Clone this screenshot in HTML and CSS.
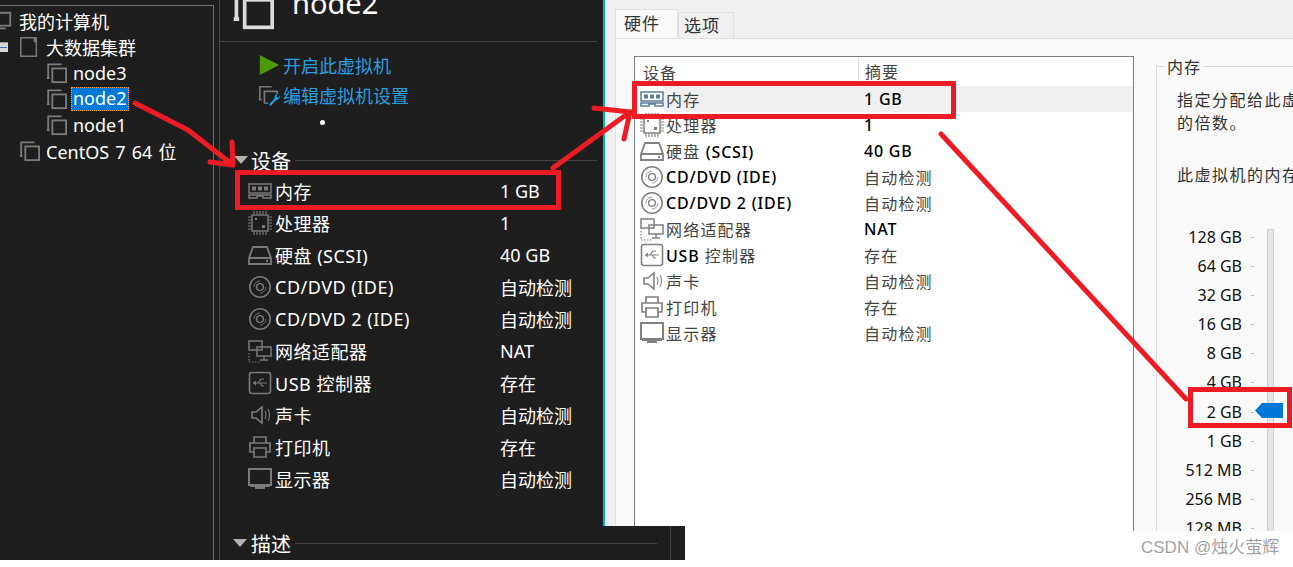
FILE: index.html
```html
<!DOCTYPE html>
<html lang="en">
<head>
    <meta charset="UTF-8">
    <title>node2</title>
    <link rel="stylesheet" href="styles.css">
</head>
<body>
    <svg class="defs" width="0" height="0">
        <symbol id="i-vm" viewBox="0 0 24 24"><path d="M3.5 17V2.5H18M2 17.5h3" fill="none" stroke="currentColor" stroke-width="2"/><rect x="8" y="7" width="15" height="15" fill="none" stroke="currentColor" stroke-width="2"/></symbol>
        <symbol id="i-team" viewBox="0 0 24 24"><path d="M3 2h15v4h1V2h1v20H3z" fill="none" stroke="currentColor" stroke-width="1.6"/></symbol>
        <symbol id="i-pc" viewBox="0 0 24 24"><path d="M1 3h20v14H1zM8 20h8" fill="none" stroke="currentColor" stroke-width="2"/></symbol>
        <symbol id="i-mem" viewBox="0 0 24 24"><path d="M1 5h22v9H1z M1 16h22v3h-8v-2h-6v2H1z" fill="none" stroke="currentColor" stroke-width="1.5"/><path d="M4 7.5h4v4H4zM10 7.5h4v4h-4zM16 7.5h4v4h-4z" fill="currentColor"/></symbol>
        <symbol id="i-cpu" viewBox="0 0 24 24"><rect x="4" y="4" width="16" height="16" fill="none" stroke="currentColor" stroke-width="1.5"/><path d="M6 0v3M9 0v3M12 0v3M15 0v3M18 0v3M6 21v3M9 21v3M12 21v3M15 21v3M18 21v3M0 6h3M0 9h3M0 12h3M0 15h3M0 18h3M21 6h3M21 9h3M21 12h3M21 15h3M21 18h3" stroke="currentColor" stroke-width="1.2"/><rect x="7" y="7" width="2" height="2" fill="currentColor"/><rect x="14" y="14" width="3" height="3" fill="currentColor"/></symbol>
        <symbol id="i-hdd" viewBox="0 0 24 24"><path d="M1 15 5 4h14l4 11v6H1zM1 15h22" fill="none" stroke="currentColor" stroke-width="1.8"/><rect x="18" y="17" width="2" height="2" fill="currentColor"/></symbol>
        <symbol id="i-cd" viewBox="0 0 24 24"><circle cx="12" cy="12" r="10.2" fill="none" stroke="currentColor" stroke-width="1.6"/><circle cx="12" cy="12" r="3.4" fill="none" stroke="currentColor" stroke-width="1.4"/><path d="M6 12a6 6 0 0 1 6-6M18 12a6 6 0 0 1-6 6" fill="none" stroke="currentColor" stroke-width=".8"/></symbol>
        <symbol id="i-net" viewBox="0 0 24 24"><path d="M1 2h13v9H1zM9 8h14v9H9zM16 17v3M12 21h8" fill="none" stroke="currentColor" stroke-width="1.5"/><path d="M1 14v9h11M4 23h1" fill="none" stroke="currentColor" stroke-width="1.2" stroke-dasharray="1.5 1.5"/></symbol>
        <symbol id="i-usb" viewBox="0 0 24 24"><rect x="1.5" y="1.5" width="21" height="21" rx="2.5" fill="none" stroke="currentColor" stroke-width="1.6"/><path d="M5 12h14M10 12l3-4h3M12 12l2 3h2" fill="none" stroke="currentColor" stroke-width="1.2"/><path d="m8 9.500-3 2.500 3 2.500z" fill="currentColor"/></symbol>
        <symbol id="i-snd" viewBox="0 0 24 24"><path d="M4 9h4l6-5v16l-6-5H4z" fill="none" stroke="currentColor" stroke-width="1.6"/><path d="M17 8q2 4 0 8M20 6q3 6 0 12" fill="none" stroke="currentColor" stroke-width="1.1"/></symbol>
        <symbol id="i-prn" viewBox="0 0 24 24"><path d="M6 8V2h12v6M6 17H2V8h20v9h-4M6 13h12v9H6z" fill="none" stroke="currentColor" stroke-width="1.7"/></symbol>
        <symbol id="i-lcd" viewBox="0 0 24 24"><path d="M1 2h22v16H1z" fill="none" stroke="currentColor" stroke-width="2"/><path d="M2 18h20v2H2zM7 20h10v2H7z" fill="currentColor"/></symbol>
    </svg>

    <div class="vm-app">
        <div class="tree">
            <div class="tree-row root"><svg class="tree-icon"><use href="#i-pc"/></svg>我的计算机</div>
            <div class="tree-row group"><span class="expander"></span><svg class="tree-icon"><use href="#i-team"/></svg>大数据集群</div>
            <div class="tree-row node"><svg class="tree-icon"><use href="#i-vm"/></svg>node3</div>
            <div class="tree-row node"><svg class="tree-icon"><use href="#i-vm"/></svg><span class="selected">node2</span></div>
            <div class="tree-row node"><svg class="tree-icon"><use href="#i-vm"/></svg>node1</div>
            <div class="tree-row top"><svg class="tree-icon"><use href="#i-vm"/></svg>CentOS 7 64 位</div>
        </div>

        <div class="details">
            <div class="title-bar">
                <svg class="title-icon"><use href="#i-vm"/></svg>
                <span class="title">node2</span>
            </div>
            <div class="actions">
                <a class="action"><svg class="action-icon" viewBox="0 0 24 24"><path d="M2 1 23 12 2 23z" fill="#4b9a06"/></svg>开启此虚拟机</a>
                <a class="action"><svg class="action-icon" viewBox="0 0 24 24"><path d="M2 17V3h13M1 17h3M7 21V8h14v3M7 21h4" fill="none" stroke="#777" stroke-width="1.8"/><path d="m12 22 6-6q-1-4 3-5l-1 3 2 1 2-3q0 5-5 6l-5 6z" fill="#1ea0d8"/></svg>编辑虚拟机设置</a>
            </div>
            <span class="dot"></span>

            <div class="section-head first"><span class="caret"></span><span>设备</span><span class="rule"></span></div>
            <div class="dev-list">
                <div class="dev-row mem"><svg class="dev-icon"><use href="#i-mem"/></svg><span class="dev-name">内存</span><span>1 GB</span></div>
                <div class="dev-row"><svg class="dev-icon"><use href="#i-cpu"/></svg><span class="dev-name">处理器</span><span>1</span></div>
                <div class="dev-row"><svg class="dev-icon"><use href="#i-hdd"/></svg><span class="dev-name">硬盘 (SCSI)</span><span>40 GB</span></div>
                <div class="dev-row"><svg class="dev-icon"><use href="#i-cd"/></svg><span class="dev-name">CD/DVD (IDE)</span><span>自动检测</span></div>
                <div class="dev-row"><svg class="dev-icon"><use href="#i-cd"/></svg><span class="dev-name">CD/DVD 2 (IDE)</span><span>自动检测</span></div>
                <div class="dev-row"><svg class="dev-icon"><use href="#i-net"/></svg><span class="dev-name">网络适配器</span><span>NAT</span></div>
                <div class="dev-row"><svg class="dev-icon"><use href="#i-usb"/></svg><span class="dev-name">USB 控制器</span><span>存在</span></div>
                <div class="dev-row"><svg class="dev-icon"><use href="#i-snd"/></svg><span class="dev-name">声卡</span><span>自动检测</span></div>
                <div class="dev-row"><svg class="dev-icon"><use href="#i-prn"/></svg><span class="dev-name">打印机</span><span>存在</span></div>
                <div class="dev-row"><svg class="dev-icon"><use href="#i-lcd"/></svg><span class="dev-name">显示器</span><span>自动检测</span></div>
            </div>

            <div class="section-head second"><span class="caret"></span><span>描述</span><span class="rule"></span></div>
        </div>
        <span class="edge"></span>
    </div>

    <div class="settings">
        <div class="tabs">
            <span class="tab active">硬件</span>
            <span class="tab">选项</span>
        </div>
        <div class="tab-panel">
            <div class="hw-list">
                <div class="hw-head"><span>设备</span><span class="hw-col">摘要</span></div>
                <div class="hw-row current"><svg class="hw-icon blue"><use href="#i-mem"/></svg><span class="hw-name">内存</span><b>1 GB</b></div>
                <div class="hw-row"><svg class="hw-icon"><use href="#i-cpu"/></svg><span class="hw-name">处理器</span><b>1</b></div>
                <div class="hw-row"><svg class="hw-icon"><use href="#i-hdd"/></svg><span class="hw-name">硬盘 <b>(SCSI)</b></span><b>40 GB</b></div>
                <div class="hw-row"><svg class="hw-icon"><use href="#i-cd"/></svg><span class="hw-name"><b>CD/DVD (IDE)</b></span><span>自动检测</span></div>
                <div class="hw-row"><svg class="hw-icon"><use href="#i-cd"/></svg><span class="hw-name"><b>CD/DVD 2 (IDE)</b></span><span>自动检测</span></div>
                <div class="hw-row"><svg class="hw-icon"><use href="#i-net"/></svg><span class="hw-name">网络适配器</span><b>NAT</b></div>
                <div class="hw-row"><svg class="hw-icon"><use href="#i-usb"/></svg><span class="hw-name"><b>USB</b> 控制器</span><span>存在</span></div>
                <div class="hw-row"><svg class="hw-icon"><use href="#i-snd"/></svg><span class="hw-name">声卡</span><span>自动检测</span></div>
                <div class="hw-row"><svg class="hw-icon"><use href="#i-prn"/></svg><span class="hw-name">打印机</span><span>存在</span></div>
                <div class="hw-row"><svg class="hw-icon"><use href="#i-lcd"/></svg><span class="hw-name">显示器</span><span>自动检测</span></div>
            </div>

            <fieldset class="mem-box">
                <legend>内存</legend>
                <p class="mem-text">指定分配给此虚拟机的内存量。内存大小必须为 4 MB<br>的倍数。</p>
                <p class="mem-text size">此虚拟机的内存(M):</p>
                <div class="slider">
                    <div class="tick">128 GB</div>
                    <div class="tick">64 GB</div>
                    <div class="tick">32 GB</div>
                    <div class="tick">16 GB</div>
                    <div class="tick">8 GB</div>
                    <div class="tick">4 GB</div>
                    <div class="tick">2 GB</div>
                    <div class="tick">1 GB</div>
                    <div class="tick">512 MB</div>
                    <div class="tick">256 MB</div>
                    <div class="tick">128 MB</div>
                    <span class="track"></span>
                    <span class="thumb"></span>
                </div>
            </fieldset>
        </div>
    </div>

    <div class="watermark">CSDN @烛火萤辉</div>

    <!-- red marks drawn over the screenshot -->
    <svg class="marks" viewBox="0 0 1293 567">
        <g fill="none" stroke="#ed1c24" stroke-width="5">
            <rect x="237.500" y="172.500" width="321" height="35"/>
            <rect x="634.500" y="83.500" width="319" height="33"/>
            <rect x="1190.500" y="389.500" width="99" height="36"/>
        </g>
        <g fill="none" stroke="#ed1c24" stroke-width="5" stroke-linecap="round" stroke-linejoin="round">
            <path d="M135 103 188 130 233 165M232 142 233 165 210 162"/>
            <path d="M553 168 630 112M594 108 630 112 624 139"/>
            <path d="M941 134 1186 399"/>
        </g>
    </svg>
</body>
</html>
```

FILE: styles.css
```css
body {
    margin: 0;
    width: 1293px;
    height: 567px;
    position: relative;
    overflow: hidden;
    background-color: #ffffff;
    font-family: "Noto Sans", "Noto Sans CJK SC", sans-serif;
}
.defs {
    position: absolute;
}

/* dark app behind */
.vm-app {
    width: 685px;
    height: 560px;
    display: flex;
    position: relative;
    background-color: #1e1e1e;
    color: #ffffff;
}
.tree {
    width: 214px;
    height: 555px;
    margin-top: 5px;
    padding-top: 1px;
    box-sizing: border-box;
    flex: none;
    border-top: 1px solid #6e6e6e;
    border-right: 1px solid #6e6e6e;
    font-size: 18px;
}
.tree-row {
    height: 26px;
    display: flex;
    align-items: center;
    white-space: nowrap;
    word-spacing: 1.500px;
    color: #ffffff;
}
.tree-icon {
    width: 22px;
    height: 22px;
    margin-right: 6px;
    color: #7a7a7a;
    flex: none;
}
.tree-row.root {
    height: 27px;
    margin-left: -9px;
}
.tree-row.group, .tree-row.top {
    padding-left: 18px;
}
.tree-row.group {
    position: relative;
}
.tree-row.node {
    padding-left: 45px;
}
.expander {
    position: absolute;
    left: -2px;
    top: 8px;
    width: 10px;
    height: 9px;
    background-color: #d8d8d8;
    border-top: 1px solid #999;
}
.expander::after {
    content: "";
    display: block;
    height: 1px;
    margin: 4px 1px 0 0;
    background-color: #3d6fb5;
}
.selected {
    height: 24px;
    line-height: 23px;
    padding: 0 2px;
    margin-left: -2px;
    background-color: #0078d7;
    outline: 1px dotted #ff9a2e;
    outline-offset: -1px;
}

.details {
    flex: 1;
    margin-left: 5px;
    border-left: 1px solid #4a4a4a;
    position: relative;
}
.title-bar {
    height: 41px;
    width: 377px;
    border-bottom: 1px solid #444444;
    display: flex;
    gap: 18px;
    overflow: hidden;
}
.title-icon {
    width: 44px;
    height: 44px;
    margin: -13px 0 0 10px;
    color: #dcdcdc;
}
.title {
    font-size: 29px;
    line-height: 30px;
    margin-top: -12px;
}
.actions {
    padding: 8px 0 0 38px;
}
.action {
    height: 30px;
    display: flex;
    align-items: center;
    gap: 3px;
    font-size: 18px;
    color: #2b9de0;
}
.action-icon {
    width: 22px;
    height: 22px;
}
.dot {
    position: absolute;
    left: 100px;
    top: 120px;
    width: 5px;
    height: 5px;
    border-radius: 50%;
    background-color: #ffffff;
}
.section-head {
    display: flex;
    align-items: center;
    font-size: 20px;
    height: 28px;
}
.section-head.first {
    margin-top: 36px;
    width: 377px;
}
.section-head.second {
    margin-top: 34px;
    width: 437px;
}
.caret {
    width: 0;
    height: 0;
    margin: 2px 3px 0 15px;
    border-left: 7px solid transparent;
    border-right: 7px solid transparent;
    border-top: 8px solid #b0b0b0;
}
.section-head.first .caret {
    margin: 0 3px 0 14px;
}
.section-head.second .caret {
    margin: 0 4px 0 13px;
}
.rule {
    flex: 1;
    height: 1px;
    margin-left: 4px;
    background-color: #444444;
}
.dev-list {
    margin-top: 0;
}
.dev-row {
    height: 32px;
    display: grid;
    grid-template-columns: 24px 222px 1fr;
    gap: 0 3px;
    align-items: center;
    padding-left: 28px;
    font-size: 18px;
    white-space: nowrap;
}
.dev-row.mem {
    height: 33px;
}
.dev-name {
    letter-spacing: .5px;
}
.dev-icon {
    width: 24px;
    height: 24px;
    color: #7a7a7a;
}
.edge {
    position: absolute;
    left: 670px;
    top: 500px;
    width: 1px;
    height: 60px;
    background-color: #444444;
}

/* settings dialog pasted on top */
.settings {
    position: absolute;
    left: 603px;
    top: 0;
    width: 690px;
    height: 531px;
    box-sizing: border-box;
    overflow: hidden;
    clip-path: polygon(0 0, 100% 0, 100% 100%, 82px 100%, 82px 526px, 0 526px);
    border-left: 2px solid #00b7c3;
    padding-left: 10px;
    background-color: #f0f0f0;
    color: #111111;
    font-size: 16px;
}
.tabs {
    height: 38px;
    display: flex;
    align-items: flex-end;
}
.tab {
    height: 26px;
    width: 56px;
    box-sizing: border-box;
    padding-left: 5px;
    line-height: 26px;
    font-size: 17px;
    letter-spacing: 1px;
    border: 1px solid #e0e0e0;
    border-bottom: none;
    color: #333333;
}
.tab.active {
    height: 29px;
    width: 63px;
    padding-left: 8px;
    line-height: 28px;
    background-color: #f9f9f9;
}
.tab-panel {
    height: 500px;
    display: flex;
    box-sizing: border-box;
    padding: 17px 0 0 18px;
    border-top: 1px solid #e0e0e0;
    border-left: 1px solid #e0e0e0;
    background-color: #f9f9f9;
}
.hw-list {
    width: 500px;
    flex: none;
    box-sizing: border-box;
    padding-top: 1px;
    border: 1px solid #7a7f85;
    background-color: #ffffff;
}
.hw-head {
    height: 28px;
    display: flex;
    padding-left: 8px;
    line-height: 30px;
    letter-spacing: 1px;
    color: #444444;
}
.hw-head .hw-col {
    margin-left: 181px;
    padding-left: 6px;
    height: 23px;
    line-height: 28px;
    border-left: 1px solid #e0e0e0;
}
.hw-row {
    height: 26px;
    display: grid;
    grid-template-columns: 24px 196px 1fr;
    gap: 0 2px;
    align-items: center;
    padding-left: 5px;
    letter-spacing: 1.200px;
    white-space: nowrap;
    color: #444444;
}
.hw-row.current {
    background: linear-gradient(to right, #ffffff 29px, #f0f0f0 29px);
}
.hw-row b {
    font-weight: 500;
    letter-spacing: .8px;
    color: #000000;
}
.hw-name {
    margin-left: 0;
}
.hw-icon {
    width: 24px;
    height: 24px;
    color: #808080;
}
.hw-icon.blue {
    color: #5b7c99;
}
.mem-box {
    width: 300px;
    flex: none;
    margin: -2px 0 0 22px;
    padding: 0 0 0 20px;
    box-sizing: border-box;
    border: 1px solid #dcdcdc;
    border-right: none;
    border-bottom: none;
}
.mem-box legend {
    padding: 0 2px;
    margin-left: -12px;
    letter-spacing: 1px;
    color: #333333;
}
.mem-text {
    margin: 11px 0 0;
    line-height: 23px;
    letter-spacing: 1.500px;
    white-space: nowrap;
    color: #333333;
}
.mem-text.size {
    margin-top: 29px;
}
.slider {
    position: relative;
    margin-top: 36px;
    width: 120px;
    padding-top: 0;
}
.tick {
    height: 29.100px;
    width: 65px;
    line-height: 29px;
    text-align: right;
    white-space: nowrap;
    position: relative;
}
.tick::after {
    content: "";
    position: absolute;
    left: 74px;
    top: 14px;
    width: 3px;
    height: 1px;
    background-color: #bbbbbb;
}
.track {
    position: absolute;
    left: 90px;
    top: 6px;
    bottom: -20px;
    width: 5px;
    background-color: #e6e6e6;
    border: 1px solid #d0d0d0;
}
.thumb {
    position: absolute;
    left: 78px;
    top: 180px;
    width: 28px;
    height: 15px;
    background-color: #0078d7;
    clip-path: polygon(0 50%, 7px 0, 100% 0, 100% 100%, 7px 100%);
}

.watermark {
    position: absolute;
    left: 1141px;
    top: 538px;
    font-size: 17px;
    line-height: 20px;
    font-family: "Liberation Sans", "Noto Sans CJK SC", sans-serif;
    color: #a3a3a3;
    white-space: nowrap;
}
.marks {
    position: absolute;
    left: 0;
    top: 0;
    width: 1293px;
    height: 567px;
    pointer-events: none;
}
```
